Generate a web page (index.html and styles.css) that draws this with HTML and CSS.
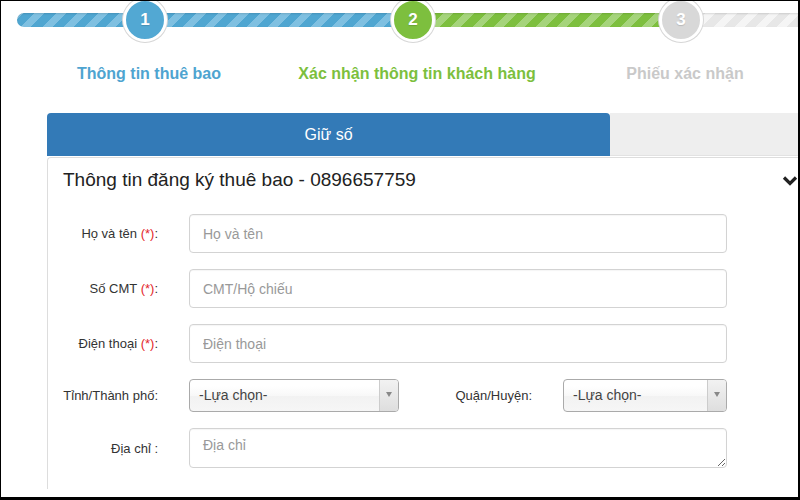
FILE: index.html
```html
<!DOCTYPE html>
<html lang="vi">
<head>
<meta charset="utf-8">
<title>Đăng ký thuê bao</title>
<link rel="stylesheet" href="styles.css">
</head>
<body>
<div class="frame">
  <div class="progress">
    <div class="seg seg-blue seg-first"></div>
    <div class="circle c-blue">1</div>
    <div class="seg seg-blue seg-mid"></div>
    <div class="circle c-green">2</div>
    <div class="seg seg-green seg-mid"></div>
    <div class="circle c-gray">3</div>
    <div class="seg seg-gray seg-last"></div>
  </div>
  <div class="step-labels">
    <div class="step-label l-blue">Thông tin thuê bao</div>
    <div class="step-label l-green">Xác nhận thông tin khách hàng</div>
    <div class="step-label l-gray">Phiếu xác nhận</div>
  </div>
  <div class="tabs">
    <div class="tab tab-active">Giữ số</div>
    <div class="tab tab-idle"></div>
  </div>
  <div class="panel">
    <div class="panel-head">
      <div class="panel-title">Thông tin đăng ký thuê bao - 0896657759</div>
      <svg class="chev" width="16" height="12" viewBox="0 0 16 12"><polyline points="2,2.5 8,8.5 14,2.5" fill="none" stroke="#222" stroke-width="3.2" stroke-linecap="butt" stroke-linejoin="miter"/></svg>
    </div>
    <div class="form">
      <div class="row">
        <label class="lbl">Họ và tên <span class="req">(*)</span>:</label>
        <input class="field" type="text" placeholder="Họ và tên">
      </div>
      <div class="row">
        <label class="lbl">Số CMT <span class="req">(*)</span>:</label>
        <input class="field" type="text" placeholder="CMT/Hộ chiếu">
      </div>
      <div class="row">
        <label class="lbl">Điện thoại <span class="req">(*)</span>:</label>
        <input class="field" type="text" placeholder="Điện thoại">
      </div>
      <div class="row">
        <label class="lbl">Tỉnh/Thành phố:</label>
        <div class="pair">
          <div class="select sel-wide"><span class="sel-text">-Lựa chọn-</span><span class="sel-arrow"><i class="tri"></i></span></div>
          <label class="lbl lbl2">Quận/Huyện:</label>
          <div class="select sel-narrow"><span class="sel-text">-Lựa chọn-</span><span class="sel-arrow"><i class="tri"></i></span></div>
        </div>
      </div>
      <div class="row">
        <label class="lbl">Địa chỉ :</label>
        <textarea class="area" placeholder="Địa chỉ"></textarea>
      </div>
    </div>
  </div>
</div>
</body>
</html>
```
FILE: styles.css
```css
* { box-sizing: border-box; }
html, body { margin: 0; padding: 0; background: #fff; }
body { font-family: "Liberation Sans", Arial, sans-serif; color: #333; }

.frame {
  width: 800px;
  height: 500px;
  border-left: 1px solid #000;
  border-top: 1px solid #000;
  border-right: 2px solid #000;
  border-bottom: 3px solid #000;
  overflow: hidden;
  background: #fff;
}

/* progress bar */
.progress {
  display: flex;
  align-items: center;
  height: 44px;
  margin-top: -3px;
  padding-left: 16px;
}
.seg { height: 14px; box-shadow: inset 0 1px 2px rgba(0,0,0,0.12); }
.seg-first { width: 110px; margin-right: -4px; border-radius: 7px 0 0 7px; }
.seg-mid { width: 232px; margin: 0 -4px; }
.seg-last { flex: 1; margin-left: -4px; }
.seg-blue { background: repeating-linear-gradient(-45deg, #4fa6d1 0 8px, #7fc0e1 8px 15px); }
.seg-green { background: repeating-linear-gradient(-45deg, #7dbf3e 0 8px, #a5d47b 8px 15px); }
.seg-gray { background: repeating-linear-gradient(-45deg, #e7e7e7 0 8px, #f5f5f5 8px 15px); }

.circle {
  position: relative;
  z-index: 1;
  width: 44px;
  height: 44px;
  flex: none;
  border-radius: 50%;
  border: 3px solid #fff;
  box-shadow: 0 0 0 1px #d6d6d6;
  display: flex;
  align-items: center;
  justify-content: center;
  color: #fff;
  font-weight: bold;
  font-size: 17px;
  text-shadow: 0 1px 1px rgba(0,0,0,0.15);
}
.c-blue { background: #52a8d3; }
.c-green { background: #7dbf3e; }
.c-gray { background: #d8d8d8; }

.step-labels {
  display: grid;
  grid-template-columns: 268px 268px 268px;
  margin: 22px 0 0 14px;
}
.step-label {
  text-align: center;
  font-weight: bold;
  font-size: 16px;
  line-height: 20px;
}
.l-blue { color: #4ea4d0; }
.l-green { color: #7cbf3d; }
.l-gray { color: #c9c9c9; }

/* tabs */
.tabs {
  display: flex;
  height: 44px;
  margin: 29px 0 0 46px;
}
.tab { height: 43px; }
.tab-active {
  width: 563px;
  background: #337ab7;
  color: #fff;
  font-size: 16px;
  display: flex;
  align-items: center;
  justify-content: center;
  border-radius: 4px 4px 0 0;
}
.tab-idle { flex: 1; background: #eee; border-bottom: 1px solid #e2e2e2; }

/* panel */
.panel {
  margin-left: 46px;
  border: 1px solid #ddd;
  border-right: none;
  border-bottom: none;
  border-radius: 4px 0 0 0;
  padding: 0 0 21px 15px;
}
.panel-head {
  display: flex;
  justify-content: space-between;
  align-items: center;
  padding-top: 11px;
  padding-right: 0;
}
.panel-title { font-size: 19px; line-height: 22px; color: #222; }
.chev { display: block; margin-top: 2px; }

.form { margin-top: 23px; display: flex; flex-direction: column; gap: 16px; }
.row {
  display: grid;
  grid-template-columns: 97px 538px;
  column-gap: 29px;
  align-items: center;
}
.lbl { text-align: right; font-size: 13px; color: #333; padding-right: 2px; }
.req { color: #e3262b; }

.field, .area {
  width: 538px;
  border: 1px solid #d3d3d3;
  border-radius: 4px;
  font-family: "Liberation Sans", Arial, sans-serif;
  font-size: 14px;
  color: #555;
  background: #fff;
  box-shadow: inset 0 1px 1px rgba(0,0,0,0.04);
  outline: none;
}
.field { height: 39px; padding: 0 13px; }
.area { height: 40px; padding: 8px 13px; display: block; resize: vertical; }
.field::placeholder, .area::placeholder { color: #999; }

.pair { display: flex; align-items: center; }
.lbl2 { width: 133px; flex: none; margin-right: 31px; padding-right: 0; }

.select {
  display: flex;
  height: 33px;
  border: 1px solid #aaa;
  border-radius: 4px;
  background: linear-gradient(#fff 20%, #f8f8f8 50%, #f2f2f2 52%, #f6f6f6 100%);
  overflow: hidden;
  flex: none;
}
.sel-wide { width: 210px; }
.sel-narrow { width: 164px; }
.sel-text { flex: 1; padding-left: 9px; font-size: 14px; line-height: 31px; color: #444; }
.sel-arrow {
  width: 19px;
  border-left: 1px solid #ccc;
  background: linear-gradient(#f2f2f2, #dedede);
  display: flex;
  justify-content: center;
  padding-top: 12px;
}
.tri {
  display: block;
  width: 0;
  height: 0;
  border-left: 3px solid transparent;
  border-right: 3px solid transparent;
  border-top: 5px solid #888;
}
```
